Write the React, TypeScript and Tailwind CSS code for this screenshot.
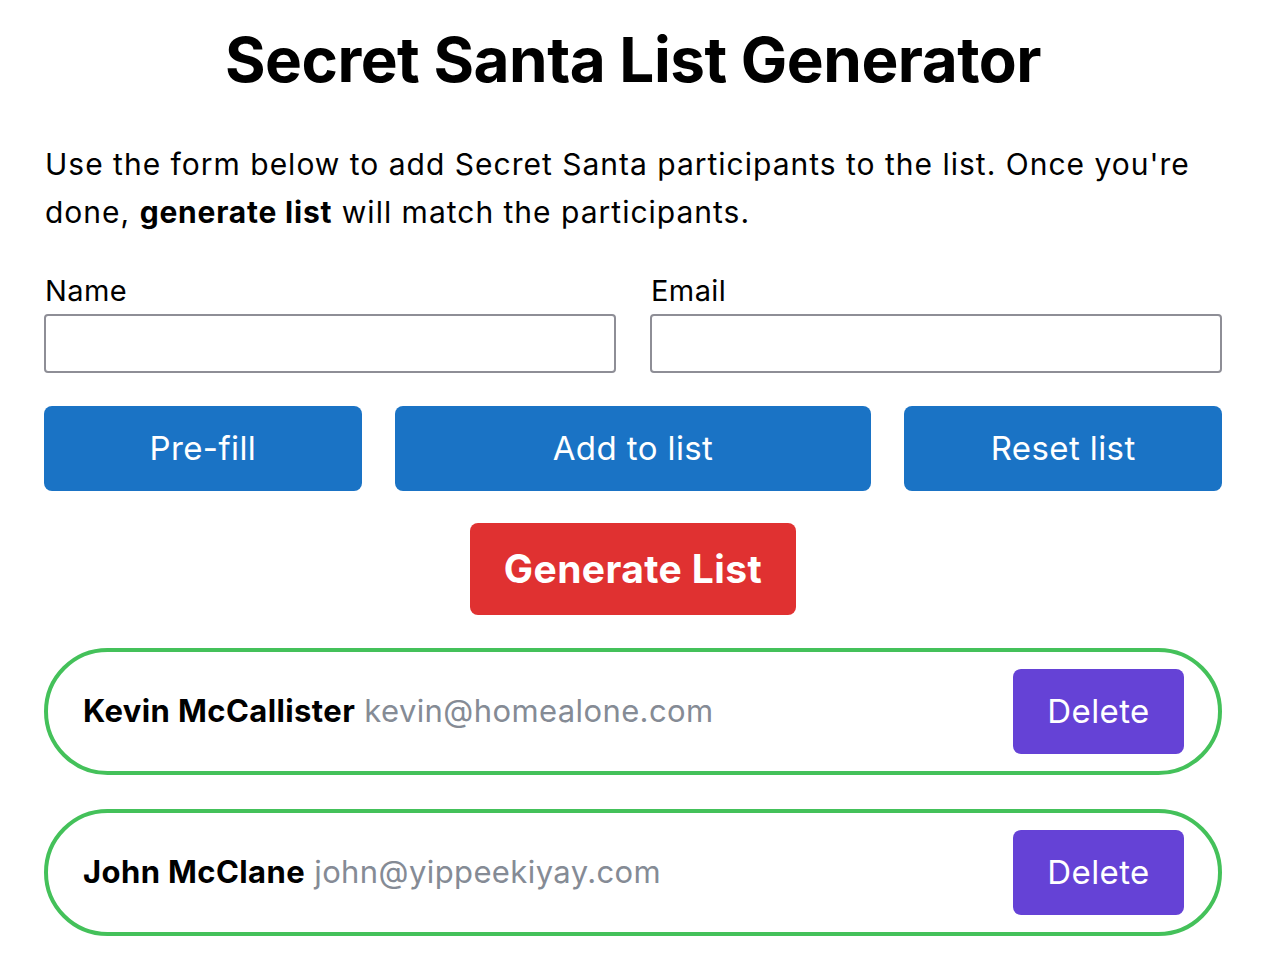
import React from "react";

const people = [
  { name: "Kevin McCallister", email: "kevin@homealone.com" },
  { name: "John McClane", email: "john@yippeekiyay.com" },
];

export default function App() {
  return (
    <div
      className="min-h-[956px] bg-white px-[44px] text-black tracking-[0.025em]"
      style={{ fontFamily: "Inter, 'Noto Sans', sans-serif" }}
    >
      <h1 className="pt-[22px] text-center text-[62px] font-bold leading-[76px] tracking-[-0.5px]">
        Secret Santa List Generator
      </h1>
      <p className="mt-[42px] pl-px text-[30px] leading-[48px] tracking-[1px]">
        Use the form below to add Secret Santa participants to the list. Once you're done,{" "}
        <b className="font-bold tracking-[0.8px]">generate list</b> will match the participants.
      </p>
      <div className="mt-[34px] flex gap-[34px]">
        <div className="flex flex-1 flex-col">
          <label className="pl-px text-[29px] leading-[42px]">Name</label>
          <input className="mt-[2px] h-[59px] rounded-[4px] border-2 border-[#8e8e96] px-3 text-[28px]" />
        </div>
        <div className="flex flex-1 flex-col">
          <label className="pl-px text-[29px] leading-[42px]">Email</label>
          <input className="mt-[2px] h-[59px] rounded-[4px] border-2 border-[#8e8e96] px-3 text-[28px]" />
        </div>
      </div>
      <div className="mt-[33px] flex gap-[33px]">
        <button className="h-[85px] flex-[2] rounded-[8px] bg-[#1a73c5] text-[33px] text-white">
          Pre-fill
        </button>
        <button className="h-[85px] flex-[3] rounded-[8px] bg-[#1a73c5] text-[33px] text-white">
          Add to list
        </button>
        <button className="h-[85px] flex-[2] rounded-[8px] bg-[#1a73c5] text-[33px] text-white">
          Reset list
        </button>
      </div>
      <div className="mt-[32px] flex justify-center">
        <button className="h-[92px] w-[326px] rounded-[8px] bg-[#e03131] text-[39px] font-bold text-white">
          Generate List
        </button>
      </div>
      <ul className="mt-[33px] flex flex-col gap-[34px]">
        {people.map((p) => (
          <li
            key={p.email}
            className="flex h-[127px] items-center justify-between rounded-full border-[4px] border-[#44c15a] pl-[35px] pr-[34px]"
          >
            <span className="text-[31px]">
              <b className="font-bold">{p.name}</b>{" "}
              <span className="text-[#858b95]">{p.email}</span>
            </span>
            <button className="h-[85px] w-[171px] rounded-[8px] bg-[#6542d6] text-[33px] text-white">
              Delete
            </button>
          </li>
        ))}
      </ul>
    </div>
  );
}
